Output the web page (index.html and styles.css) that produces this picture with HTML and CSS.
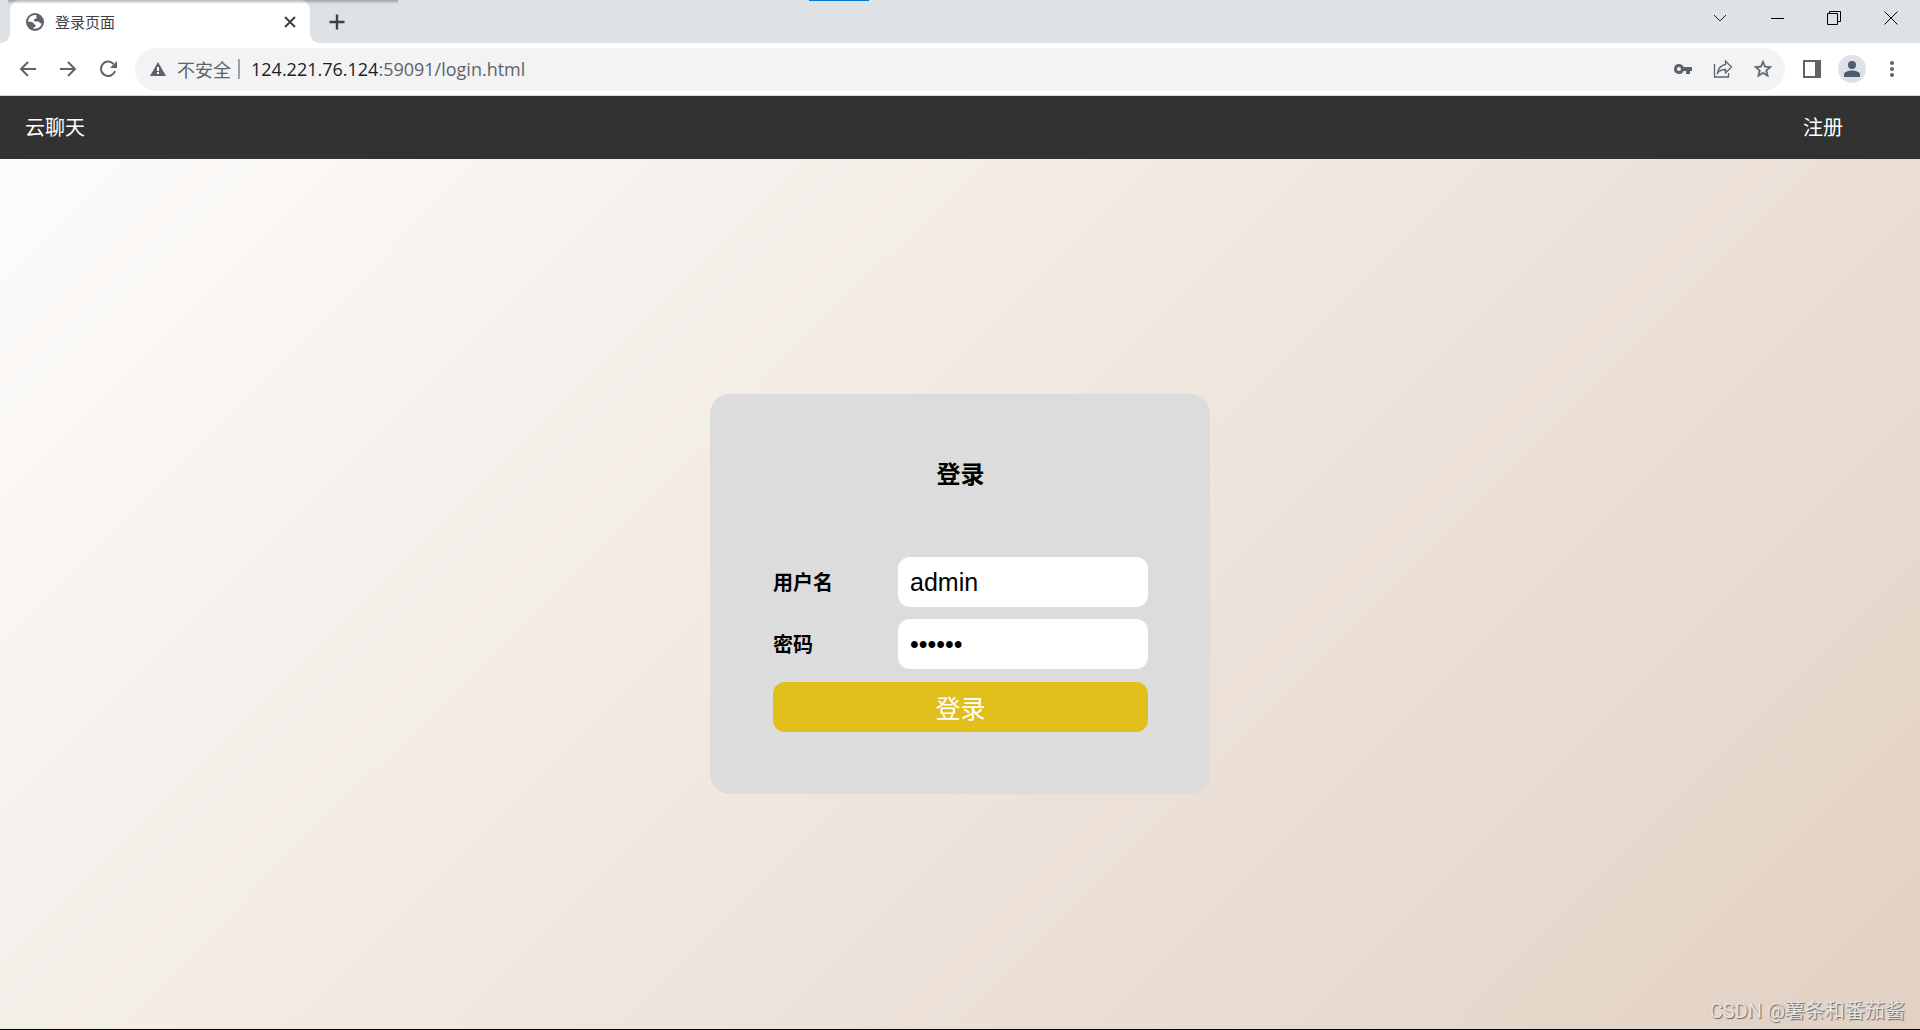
FILE: index.html
```html
<!DOCTYPE html>
<html lang="zh-CN">
<head>
<meta charset="utf-8">
<title>登录页面</title>
<link rel="stylesheet" href="styles.css">
</head>
<body>
<header class="browser">
  <div class="tabstrip">
    <div class="tab">
      <svg class="tab-icon" viewBox="0 0 18 18" aria-hidden="true"><circle cx="9" cy="9" r="9" fill="#5f6368"/><path d="M10.500 2.200C6 1.500 2.300 4.500 2 8.800c1.500 0 3.200 0 4.400.5 1.600.6 1.200 2 2.600 2.400.8.200.9 1 .4 1.700-.6.900-2.200.8-2.400 2 4.300 1.200 7.800-1.300 8.800-4.900-1.300.2-1.900-.7-2.800-1.600-1-.9-2.600-.2-3.900-.5C7.800 8.100 7.500 7 8.300 6.300c.7-.6 1.800-.3 2.200-1.200.4-1-.5-1.800 0-2.900z" fill="#fff"/></svg>
      <span class="tab-title">登录页面</span>
      <button class="icon-btn tab-close" aria-label="关闭标签页"><svg width="12" height="12" viewBox="0 0 12 12"><path d="M1 1l10 10M11 1L1 11" stroke="#3c4043" stroke-width="2"/></svg></button>
    </div>
    <button class="icon-btn new-tab" aria-label="新标签页"><svg width="16" height="16" viewBox="0 0 16 16"><path d="M8 .5v15M.5 8h15" stroke="#3c4043" stroke-width="2.400"/></svg></button>
    <div class="window-controls">
      <button class="icon-btn" aria-label="搜索标签页"><svg width="14" height="14" viewBox="0 0 14 14"><path d="M1 4l6 6 6-6" fill="none" stroke="#222"/></svg></button>
      <button class="icon-btn" aria-label="最小化"><svg width="14" height="14" viewBox="0 0 14 14"><path d="M1 7.500h13" stroke="#000"/></svg></button>
      <button class="icon-btn" aria-label="还原"><svg width="14" height="14" viewBox="0 0 14 14"><path d="M.5 2.500h10v11H.5zM2.500 2.500v-2h11v10h-3" fill="none" stroke="#000"/></svg></button>
      <button class="icon-btn" aria-label="关闭"><svg width="14" height="14" viewBox="0 0 14 14"><path d="M.5.5l13 13M13.500.5l-13 13" stroke="#000"/></svg></button>
    </div>
  </div>
  <div class="toolbar">
    <div class="nav-buttons">
      <button class="icon-btn" aria-label="后退"><svg width="18" height="18" viewBox="0 0 18 18"><path d="M17 9H2M9 2L2 9l7 7" fill="none" stroke="#5f6368" stroke-width="2"/></svg></button>
      <button class="icon-btn" aria-label="前进"><svg width="18" height="18" viewBox="0 0 18 18"><path d="M1 9h15M9 2l7 7-7 7" fill="none" stroke="#5f6368" stroke-width="2"/></svg></button>
      <button class="icon-btn" aria-label="重新加载"><svg width="18" height="18" viewBox="0 0 18 18"><path d="M14.500 4A7.200 7.200 0 1 0 16 11" fill="none" stroke="#5f6368" stroke-width="2"/><path d="M18 1v7h-7z" fill="#5f6368"/></svg></button>
    </div>
    <div class="omnibox">
      <svg width="16" height="14" viewBox="0 0 16 14" aria-hidden="true"><path d="M8 0l8 14H0z" fill="#5f6368"/><path d="M8 5v4M8 10v2" stroke="#fff" stroke-width="2"/></svg>
      <span class="security">不安全</span>
      <span class="divider"></span>
      <span class="url"><span class="host">124.221.76.124</span>:59091/login.html</span>
      <button class="icon-btn" aria-label="密码"><svg width="18" height="12" viewBox="0 0 18 12"><path fill-rule="evenodd" d="M5 1a5 5 0 1 0 4.600 7H12v3h4V8h2V4H9.600A5 5 0 0 0 5 1zm0 3a2 2 0 1 1 0 4 2 2 0 0 1 0-4z" fill="#5f6368"/></svg></button>
      <button class="icon-btn" aria-label="分享"><svg width="20" height="20" viewBox="0 0 20 20"><path d="M1.500 5v13h14V14M12.500 5.500V2l6 6-6 6v-3.500c-3.500 0-6 1-8 3.500.5-4 3-7.500 8-8.500z" fill="none" stroke="#5f6368" stroke-width="1.300"/></svg></button>
      <button class="icon-btn" aria-label="收藏"><svg width="18" height="18" viewBox="2 2 20 20"><path fill="#5f6368" stroke="#5f6368" stroke-width=".4" d="M22 9.240l-7.190-.62L12 2 9.190 8.630 2 9.240l5.460 4.730L5.820 21 12 17.270 18.180 21l-1.630-7.030L22 9.240zM12 15.400l-3.760 2.270 1-4.280-3.320-2.880 4.380-.38L12 6.100l1.710 4.040 4.380.38-3.320 2.880 1 4.280L12 15.400z"/></svg></button>
    </div>
    <div class="toolbar-actions">
      <button class="icon-btn" aria-label="侧边栏"><svg width="18" height="18" viewBox="0 0 18 18"><path fill-rule="evenodd" d="M0 0h18v18H0zM2 2v14h10V2z" fill="#5f6368"/></svg></button>
      <button class="icon-btn avatar" aria-label="用户"><svg width="16" height="16" viewBox="0 0 16 16"><circle cx="8" cy="4" r="4" fill="#4f5b6e"/><path d="M0 16v-2.500C0 10.500 5 9.500 8 9.500s8 1 8 4V16z" fill="#4f5b6e"/></svg></button>
      <button class="icon-btn" aria-label="菜单"><svg width="18" height="18" viewBox="0 0 18 18"><g fill="#5f6368"><circle cx="9" cy="3" r="2"/><circle cx="9" cy="9" r="2"/><circle cx="9" cy="15" r="2"/></g></svg></button>
    </div>
  </div>
</header>
<nav class="site-nav">
  <span>云聊天</span>
  <a href="#register">注册</a>
</nav>
<main class="login">
  <form class="card">
    <h3 class="card-title">登录</h3>
    <div class="row">
      <label for="username">用户名</label>
      <input id="username" type="text" value="admin">
    </div>
    <div class="row">
      <label for="password">密码</label>
      <input id="password" type="password" value="123456">
    </div>
    <button class="submit" type="button">登录</button>
  </form>
</main>
<span class="watermark">CSDN @薯条和番茄酱</span>
</body>
</html>
```
FILE: styles.css
```css
* { box-sizing: border-box; }

body {
  margin: 0;
  min-height: 100vh;
  display: flex;
  flex-direction: column;
  position: relative;
  border-bottom: 1px solid #000;
  font-family: "Liberation Sans", "Noto Sans CJK SC", sans-serif;
  font-size: 20px;
}

.icon-btn {
  display: flex;
  align-items: center;
  justify-content: center;
  flex: none;
  padding: 0;
  border: 0;
  background: none;
}

/* browser frame */
.browser {
  background: #fff;
  border-bottom: 1px solid #d5d7da;
}

.tabstrip {
  height: 43px;
  display: flex;
  align-items: center;
  padding-left: 10px;
  background: #dee1e6;
  position: relative;
}

.tabstrip::before {
  content: "";
  position: absolute;
  z-index: 2;
  left: 8px;
  top: 0;
  width: 390px;
  height: 4px;
  background: linear-gradient(rgba(0, 0, 0, .28), rgba(0, 0, 0, 0));
}

.tabstrip::after {
  content: "";
  position: absolute;
  left: 809px;
  top: 0;
  width: 301px;
  height: 1px;
  background: linear-gradient(90deg, #0078d7 60px, #e5e5e5 60px);
}

.tab {
  width: 300px;
  height: 43px;
  display: flex;
  align-items: center;
  padding: 0 14px 0 16px;
  border-radius: 10px 10px 0 0;
  background: #fff;
  position: relative;
}

.tab::before,
.tab::after {
  content: "";
  position: absolute;
  bottom: 0;
  width: 10px;
  height: 10px;
}

.tab::before {
  right: 100%;
  background: radial-gradient(circle at 0 0, transparent 10px, #fff 10px);
}

.tab::after {
  left: 100%;
  background: radial-gradient(circle at 100% 0, transparent 10px, #fff 10px);
}

.tab-icon { width: 18px; height: 18px; }

.tab-title {
  flex: 1;
  margin-left: 11px;
  font-family: "Noto Sans CJK SC", sans-serif;
  font-size: 15px;
  line-height: 24px;
  color: #3c4043;
}

.new-tab { margin-left: 19px; }

.window-controls {
  margin-left: auto;
  height: 36px;
  align-self: flex-start;
  display: flex;
  padding-right: 1px;
}

.window-controls .icon-btn { width: 57px; }

.toolbar {
  height: 52px;
  display: flex;
  align-items: center;
}

.nav-buttons {
  display: flex;
  gap: 22px;
  padding: 0 18px 0 19px;
}

.omnibox {
  flex: 1;
  height: 43px;
  display: flex;
  align-items: center;
  padding: 0 2px 0 15px;
  border-radius: 22px;
  background: #f1f3f4;
  font-family: "Open Sans", "Noto Sans CJK SC", sans-serif;
  font-size: 18px;
  line-height: 24px;
  color: #5f6368;
}

.omnibox .icon-btn { width: 40px; }

.security {
  margin-left: 11px;
  font-family: "Noto Sans CJK SC", sans-serif;
}

.divider {
  width: 2px;
  height: 20px;
  margin: 0 11px 0 7px;
  background: #9aa0a6;
}

.url { flex: 1; }

.host { color: #202124; }

.toolbar-actions {
  display: flex;
  align-items: center;
  gap: 17px;
  padding: 0 19px 0 18px;
}

.avatar {
  width: 28px;
  height: 28px;
  border-radius: 50%;
  background: #dee1e6;
}

/* page */
.site-nav {
  height: 63px;
  display: flex;
  align-items: center;
  justify-content: space-between;
  padding: 0 77px 0 25px;
  background: #323232;
  color: #fff;
  line-height: 30px;
}

.site-nav a {
  color: #fff;
  text-decoration: none;
}

.login {
  flex: 1;
  display: flex;
  align-items: center;
  justify-content: center;
  background: linear-gradient(135deg, #fdfcfb 0%, #e2d1c3 100%);
}

.card {
  width: 500px;
  padding: 63px 62px 62px 63px;
  display: flex;
  flex-direction: column;
  border-radius: 20px;
  background: #dcdcdc;
}

.card-title {
  margin: 0 0 64px;
  text-align: center;
  font-size: 24px;
  line-height: 36px;
}

.row {
  display: flex;
  align-items: center;
  margin-bottom: 12px;
}

.row label {
  width: 125px;
  padding-top: 2px;
  font-weight: bold;
  line-height: 30px;
}

.row input {
  width: 250px;
  height: 50px;
  padding: 0 12px;
  border: 0;
  border-radius: 12px;
  background: #fff;
  color: #000;
  font: 25px "Liberation Sans", sans-serif;
}

.submit {
  height: 50px;
  margin-top: 1px;
  padding: 0;
  border: 0;
  border-radius: 12px;
  background: #e0bf1b;
  color: #fff;
  font: 25px "Noto Sans CJK SC", sans-serif;
}

.watermark {
  position: absolute;
  right: 15px;
  bottom: 4px;
  color: #e6e2df;
  font-family: Roboto, "Noto Sans CJK SC", sans-serif;
  line-height: 28px;
  text-shadow: 1px 1px 1px #666;
}
```
